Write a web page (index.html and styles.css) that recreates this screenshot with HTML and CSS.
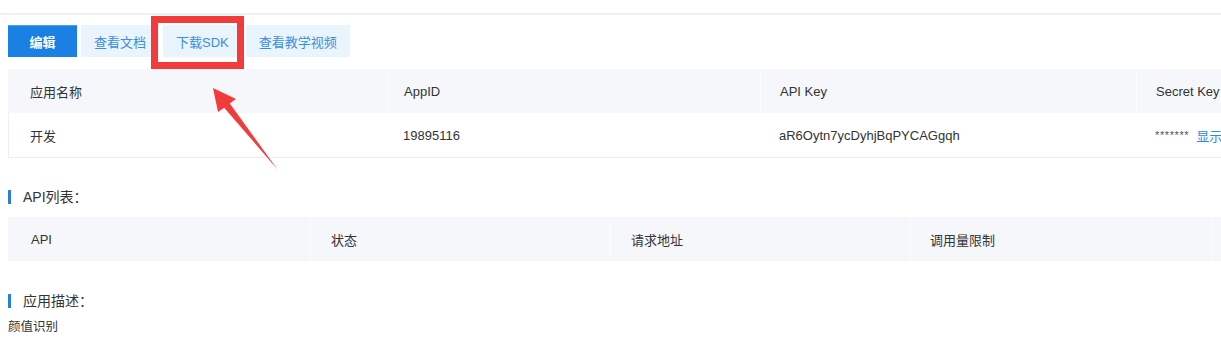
FILE: index.html
```html
<!DOCTYPE html>
<html lang="zh-CN">
<head>
<meta charset="utf-8">
<title>应用详情</title>
<link rel="stylesheet" href="styles.css">
</head>
<body>
<div class="page">
  <div class="topbar"></div>
  <div class="toolbar">
    <button class="btn btn-primary">编辑</button>
    <button class="btn btn-light">查看文档</button>
    <button class="btn btn-light">下载SDK</button>
    <button class="btn btn-light">查看教学视频</button>
  </div>

  <div class="table app-table">
    <div class="row head">
      <div class="cell c1">应用名称</div>
      <div class="cell c2">AppID</div>
      <div class="cell c3">API Key</div>
      <div class="cell c4">Secret Key</div>
    </div>
    <div class="row body">
      <div class="cell c1">开发</div>
      <div class="cell c2">19895116</div>
      <div class="cell c3">aR6Oytn7ycDyhjBqPYCAGgqh</div>
      <div class="cell c4"><span class="stars">*******</span><a class="link">显示</a></div>
    </div>
  </div>

  <div class="section-title first">API列表：</div>
  <div class="table api-table">
    <div class="row head">
      <div class="cell a1">API</div>
      <div class="cell a2">状态</div>
      <div class="cell a3">请求地址</div>
      <div class="cell a4">调用量限制</div>
      <div class="cell a5"></div>
    </div>
  </div>

  <div class="section-title second">应用描述：</div>
  <div class="desc">颜值识别</div>

  <div class="highlight-box"></div>
  <svg class="arrow" width="1221" height="345" viewBox="0 0 1221 345">
    <polygon points="213,88 236,99 229.8,103.6 277.5,169.5 224.2,107.8 218,112" fill="#f23b3b"/>
  </svg>
</div>
</body>
</html>
```

FILE: styles.css
```css
* { box-sizing: border-box; }

html, body {
  margin: 0;
  padding: 0;
  background: #ffffff;
  overflow: hidden;
}

body {
  font-family: "Liberation Sans", "Noto Sans CJK SC", sans-serif;
  font-size: 13px;
  color: #333333;
}

.page {
  position: relative;
  width: 1221px;
  height: 345px;
  padding: 0 0 0 8px;
  overflow: hidden;
}

.topbar {
  height: 15px;
  margin-left: -8px;
  border-bottom: 2px solid #eff0f2;
}

.toolbar {
  display: flex;
  gap: 4px;
  margin-top: 10px;
  height: 32px;
}

.btn {
  height: 32px;
  border: none;
  border-radius: 0;
  font-family: inherit;
  font-size: 13px;
  padding: 0 13px;
  cursor: pointer;
}

.btn-primary {
  background: #1b80e4;
  color: #ffffff;
  font-weight: bold;
  width: 69px;
  padding: 0;
  box-shadow: inset 0 1px 0 #4aa0f0;
}

.btn-light {
  background: #eaf4fd;
  color: #3a8de0;
}

.table {
  width: 1500px;
}

.app-table {
  margin-top: 12px;
}

.row {
  display: flex;
  height: 44px;
  align-items: center;
}

.row.head {
  background: #f5f7fa;
}

.row.body {
  height: 45px;
  border-bottom: 1px solid #eaecef;
  border-left: 1px solid #eeeff2;
}

.cell {
  flex-shrink: 0;
  height: 100%;
  display: flex;
  align-items: center;
  white-space: nowrap;
}

.head .cell + .cell {
  border-left: 1px solid #fbfcfd;
}

.c1 { width: 379px; padding-left: 22px; }
.c2 { width: 373px; padding-left: 16px; }
.c3 { width: 376px; padding-left: 19px; }
.c4 { width: 300px; padding-left: 19px; }

.body .c1 { width: 378px; padding-left: 21px; }

.stars {
  color: #555555;
  font-size: 11px;
  letter-spacing: 0.6px;
  margin-right: 7px;
}

.link {
  color: #2d8be6;
  font-size: 13px;
}

.section-title {
  position: relative;
  height: 20px;
  line-height: 20px;
  padding-left: 15px;
  font-size: 14px;
  color: #333333;
}

.section-title::before {
  content: "";
  position: absolute;
  left: 0;
  top: 3px;
  width: 3px;
  height: 14px;
  background: #2a7fd6;
}

.section-title.first {
  margin-top: 29px;
  margin-bottom: 10px;
}

.section-title.second {
  margin-top: 30px;
}

.a1 { width: 302px; padding-left: 23px; }
.a2 { width: 300px; padding-left: 20px; }
.a3 { width: 300px; padding-left: 20px; }
.a4 { width: 302px; padding-left: 19px; }
.a5 { width: 296px; }

.desc {
  margin-top: 6px;
  height: 20px;
  line-height: 20px;
  font-size: 12.5px;
  color: #333333;
}

.highlight-box {
  position: absolute;
  left: 151px;
  top: 16px;
  width: 93px;
  height: 53px;
  border: 7px solid #f23b3b;
}

.arrow {
  position: absolute;
  left: 0;
  top: 0;
  pointer-events: none;
}
```
